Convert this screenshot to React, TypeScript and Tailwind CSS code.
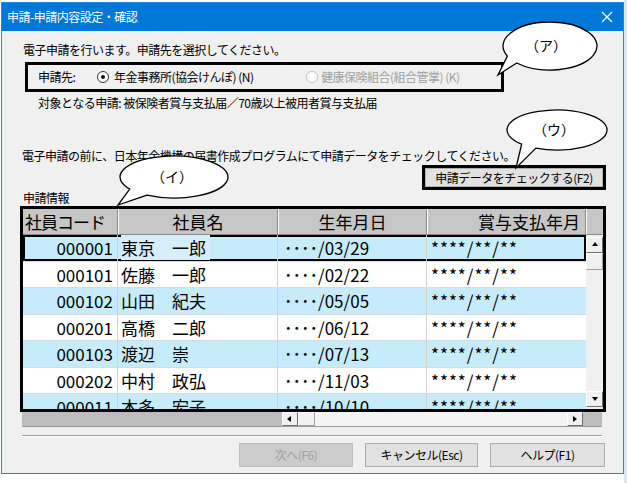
import React from 'react';

type Row = { code: string; name: string; birth: string };

const rows: Row[] = [
  { code: '000001', name: '東京　一郎', birth: '････/03/29' },
  { code: '000101', name: '佐藤　一郎', birth: '････/02/22' },
  { code: '000102', name: '山田　紀夫', birth: '････/05/05' },
  { code: '000201', name: '高橋　二郎', birth: '････/06/12' },
  { code: '000103', name: '渡辺　崇', birth: '････/07/13' },
  { code: '000202', name: '中村　政弘', birth: '････/11/03' },
  { code: '000011', name: '本多　宏子', birth: '････/10/10' },
];

// speech bubble: ellipse plus a tail pointing at (tx, ty)
function bubble(cx: number, cy: number, rx: number, ry: number, a1: number, a2: number, tx: number, ty: number) {
  const pt = (a: number) => [cx + rx * Math.cos((a * Math.PI) / 180), cy + ry * Math.sin((a * Math.PI) / 180)];
  const [x1, y1] = pt(a1);
  const [x2, y2] = pt(a2);
  return `M${x1},${y1} L${tx},${ty} L${x2},${y2} A${rx},${ry} 0 1 1 ${x1},${y1} Z`;
}

const Radio = ({ checked, disabled }: { checked?: boolean; disabled?: boolean }) => (
  <span
    className={`inline-flex items-center justify-center w-[12px] h-[12px] rounded-full border bg-white shrink-0 ${
      disabled ? 'border-[#c4c4c4]' : 'border-[#333333]'
    }`}
  >
    {checked && <span className="w-[4px] h-[4px] rounded-full bg-[#111]" />}
  </span>
);

const Arrow = ({ dir }: { dir: 'up' | 'down' | 'left' | 'right' }) => {
  const d = {
    up: 'M1 5 L4 1 L7 5 Z',
    down: 'M1 2 L7 2 L4 6 Z',
    left: 'M5 1 L5 7 L1 4 Z',
    right: 'M2 1 L2 7 L6 4 Z',
  }[dir];
  return (
    <svg width="8" height="8" viewBox="0 0 8 8">
      <path d={d} fill="#000" />
    </svg>
  );
};

const ScrollBtn = ({ dir, className = '' }: { dir: 'up' | 'down' | 'left' | 'right'; className?: string }) => (
  <div
    className={`flex items-center justify-center bg-[#f0f0f0] border border-t-white border-l-white border-r-[#6f6f6f] border-b-[#6f6f6f] ${className}`}
  >
    <Arrow dir={dir} />
  </div>
);

const App = () => {
  return (
    <div className="relative w-[627px] h-[483px] bg-white overflow-hidden flex text-black font-['Noto_Sans_CJK_JP',sans-serif]">
      {/* Window */}
      <div className="ml-[1px] mt-[2px] w-[623px] h-[472px] border border-[#2a86d6] bg-[#f0f0f0] flex flex-col">
        {/* Title bar */}
        <div className="h-[28px] shrink-0 bg-[#0078d7] flex items-center justify-between pl-[5px] pr-[10px] text-white text-[12px] tracking-[-0.5px]">
          <span>申請-申請内容設定・確認</span>
          <svg width="12" height="12" viewBox="0 0 12 12">
            <path d="M1 1 L11 11 M11 1 L1 11" stroke="#fff" strokeWidth="1.2" />
          </svg>
        </div>

        <div className="flex flex-col pl-[18px] pr-[15px] text-[12px] leading-[14px] tracking-[-0.5px]">
          <div className="pt-[12px] ml-[3px] h-[26px]">電子申請を行います。申請先を選択してください。</div>

          {/* (ア) box */}
          <div className="mt-[5px] ml-[5px] w-[479px] h-[30px] border-[3px] border-black flex items-center pl-[10px]">
            <span className="w-[59px]">申請先:</span>
            <span className="w-[209px] flex items-center">
              <Radio checked />
              <span className="ml-[5px]">年金事務所(協会けんぽ) (N)</span>
            </span>
            <span className="flex items-center text-[#a0a0a0]">
              <Radio disabled />
              <span className="ml-[3px]">健康保険組合(組合管掌) (K)</span>
            </span>
          </div>

          <div className="mt-[4px] ml-[18px]">対象となる申請: 被保険者賞与支払届／70歳以上被用者賞与支払届</div>

          <div className="mt-[39px] ml-[2px]">電子申請の前に、日本年金機構の届書作成プログラムにて申請データをチェックしてください。</div>

          {/* (ウ) button */}
          <div className="mt-[2px] self-end mr-[2px] w-[184px] h-[25px] border-[3px] border-black flex">
            <div className="flex-1 bg-[#e1e1e1] border border-[#adadad] flex items-center justify-center">
              申請データをチェックする(F2)
            </div>
          </div>

          <div className="ml-[3px] h-[16px] leading-[15px]">申請情報</div>

          {/* (イ) grid */}
          <div className="w-[586px] h-[206px] border-[3px] border-black overflow-hidden flex flex-col text-[17px] tracking-normal">
            <div className="h-[26px] shrink-0 flex bg-[#c6c6c6] leading-[25px] border-b border-[#8a8a8a]">
              <div className="w-[95px] border-r border-[#8a8a8a] pl-[2px] tracking-[-1px]">社員コード</div>
              <div className="w-[160px] border-r border-[#8a8a8a] border-l border-l-white text-center">社員名</div>
              <div className="w-[149px] border-r border-[#8a8a8a] border-l border-l-white text-center">生年月日</div>
              <div className="w-[159px] border-r border-[#8a8a8a] border-l border-l-white text-right pr-[5px]">賞与支払年月</div>
              <div className="flex-1 border-l border-l-white" />
            </div>
            <div className="flex flex-1 min-h-0">
              <div className="w-[563px] flex flex-col">
                {rows.map((r, i) => (
                  <div
                    key={r.code}
                    className={`h-[26.5px] shrink-0 flex leading-[25px] border-b border-[#dadada] ${
                      i % 2 === 0 ? 'bg-[#c6ecfb]' : 'bg-white'
                    } ${i === 0 ? 'shadow-[inset_0_0_0_2px_#000]' : ''}`}
                  >
                    <div className="w-[95px] border-r border-[#d0d0d0] text-right pr-[4px]">{r.code}</div>
                    <div className="w-[160px] border-r border-[#d0d0d0] pl-[3px]">
                      <span className={i === 0 ? 'bg-[#d6eefb] pr-[4px]' : ''}>{r.name}</span>
                    </div>
                    <div className="w-[149px] border-r border-[#d0d0d0] pl-[6px]">{r.birth}</div>
                    <div className="w-[159px] pl-[4px] text-[17px] tracking-[1px]">****/**/**</div>
                  </div>
                ))}
              </div>
              {/* vertical scrollbar */}
              <div className="w-[17px] flex flex-col bg-[#f0f0f0]">
                <ScrollBtn dir="up" className="h-[16px] mt-[2px]" />
                <div className="h-[17px] bg-[#f0f0f0] border border-t-white border-l-white border-r-[#a0a0a0] border-b-[#a0a0a0]" />
                <div className="flex-1" />
                <ScrollBtn dir="down" className="h-[16px] mb-[2px]" />
              </div>
            </div>
          </div>

          {/* horizontal scrollbar */}
          <div className="ml-[2px] w-[580px] h-[15px] flex bg-[#bdbdbd] border-b border-[#9a9a9a]">
            <div className="w-[260px]" />
            <ScrollBtn dir="left" className="w-[16px]" />
            <div className="w-[17px] bg-[#f0f0f0] border border-t-white border-l-white border-r-[#a0a0a0] border-b-[#a0a0a0]" />
            <div className="flex-1 bg-[#f4f4f4]" />
            <ScrollBtn dir="right" className="w-[16px]" />
            <div className="w-[19px]" />
          </div>

          <div className="mt-[8px] ml-[2px] w-[580px] border-t border-[#a0a0a0] border-b border-b-white" />

          {/* bottom buttons */}
          <div className="mt-[6px] mr-[3px] flex justify-end gap-[12px] h-[24px]">
            <div className="w-[114px] border border-[#bfbfbf] bg-[#cccccc] text-[#a0a0a0] flex items-center justify-center">
              次へ(F6)
            </div>
            <div className="w-[113px] border border-[#adadad] bg-[#e1e1e1] flex items-center justify-center">
              キャンセル(Esc)
            </div>
            <div className="w-[115px] border border-[#adadad] bg-[#e1e1e1] flex items-center justify-center">
              ヘルプ(F1)
            </div>
          </div>
        </div>
      </div>
      <div className="flex-1 bg-[#dce6ee]" />

      {/* callouts */}
      <svg className="absolute inset-0 pointer-events-none" width="627" height="483" viewBox="0 0 627 483">
        <path d={bubble(550, 46, 47, 24, 135, 155, 498, 75)} fill="#fff" stroke="#000" strokeWidth="1.3" />
        <path d={bubble(557, 130, 50, 20, 115, 135, 516, 168)} fill="#fff" stroke="#000" strokeWidth="1.3" />
        <path d={bubble(174, 177, 54, 21, 120, 145, 118, 205)} fill="#fff" stroke="#000" strokeWidth="1.3" />
        <g fontFamily="'Noto Sans CJK JP', sans-serif" fontSize="14" textAnchor="middle" fill="#000">
          <text x="546" y="51">（ア）</text>
          <text x="554" y="135">（ウ）</text>
          <text x="172" y="182">（イ）</text>
        </g>
      </svg>
    </div>
  );
};

export default App;
